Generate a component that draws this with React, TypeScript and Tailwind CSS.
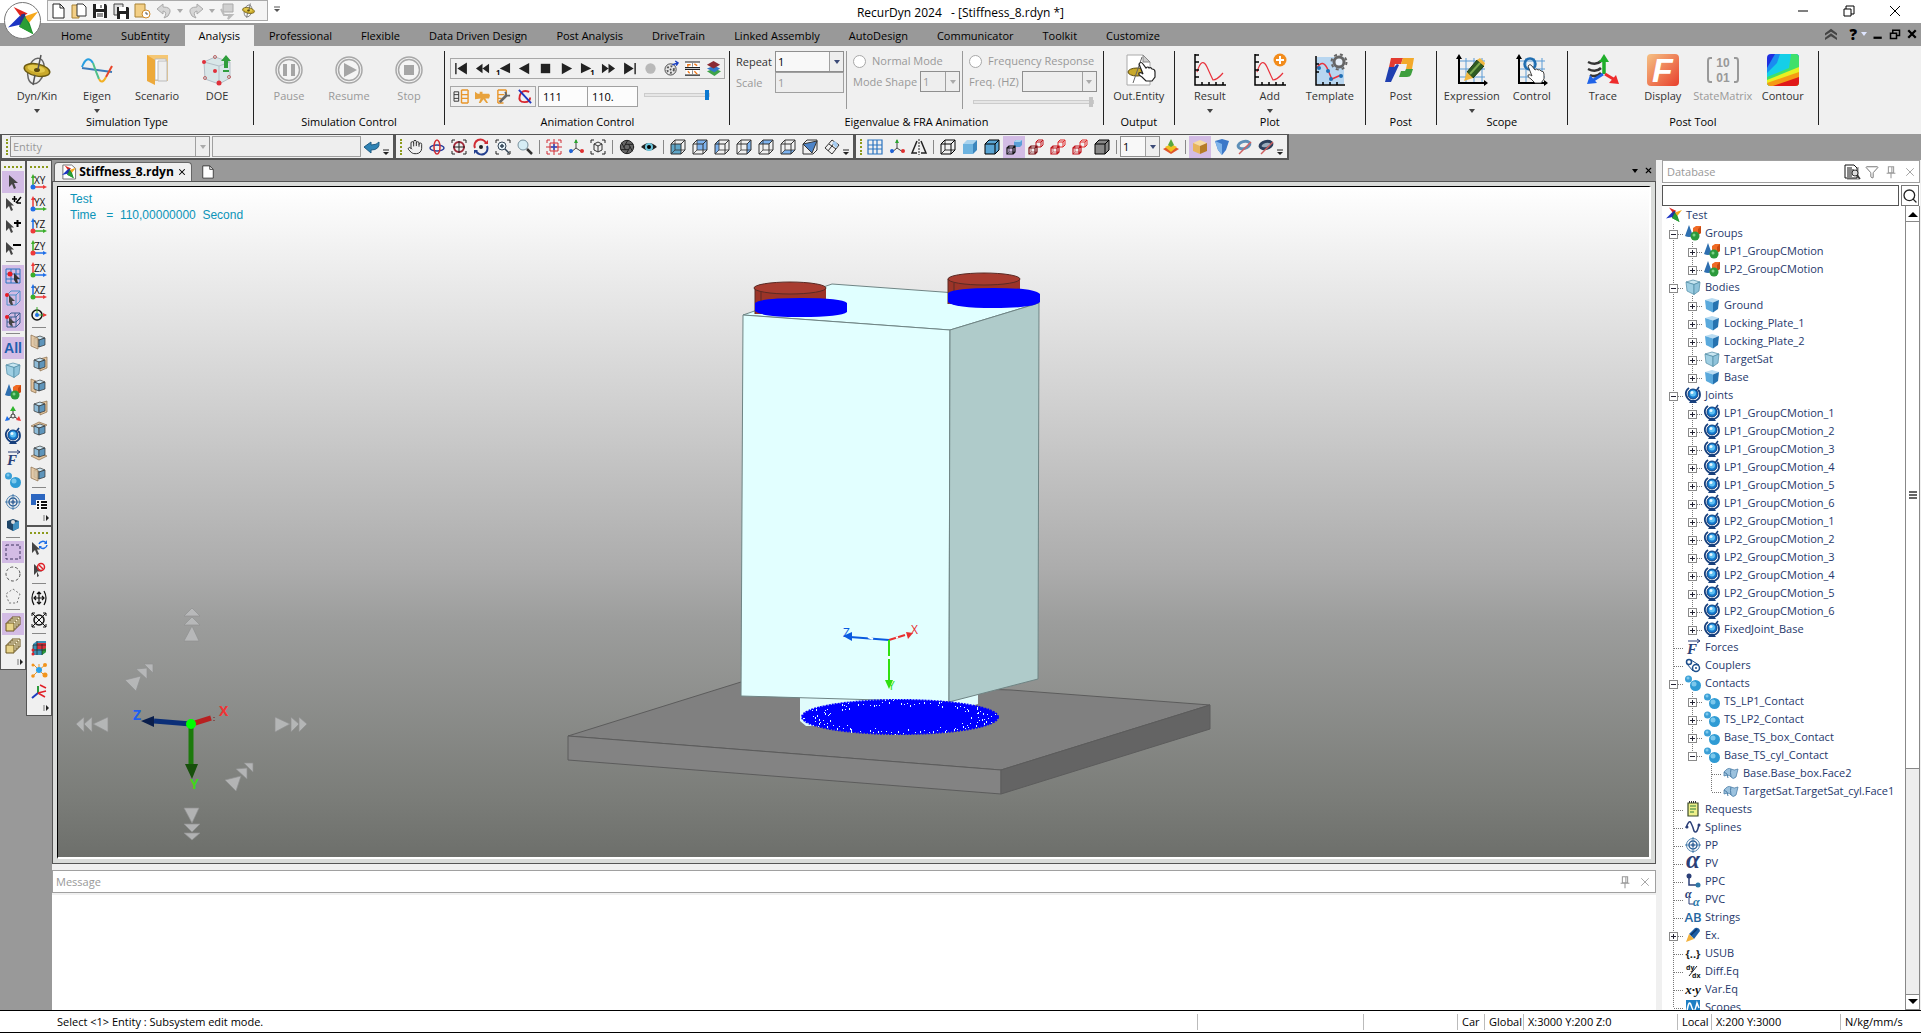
import type { ReactNode } from "react";
import clsx from "clsx";
import { Aperture, Filter, Hand, Search, X } from "lucide-react";

type IconProps = { children: ReactNode; size?: string; box?: number };

const Icon = ({ children, size = "h-4 w-4", box = 16 }: IconProps) => (
  <svg viewBox={`0 0 ${box} ${box}`} className={clsx(size, "shrink-0 overflow-visible")} fill="none">
    {children}
  </svg>
);

/* ---------- shared drawings ---------- */

const StarShape = () => (
  <>
    <path d="M0 23 14 9 17 19Z" fill="#1c35c4" />
    <path d="M6 1 21 8 14 12Z" fill="#e0261f" />
    <path d="M32 6 20 21 15 12Z" fill="#f7a91c" />
    <path d="M27 30 12 22 19 13 23 18Z" fill="#1a8f2b" />
    <path d="M14 9 18 8 20 21 12 22Z" fill="#25358c" />
    <path d="M18 11 24 24 27 30 12 22Z" fill="#2a9d36" />
  </>
);

const Gyro = ({ size = "h-8 w-8" }: { size?: string }) => (
  <Icon box={32} size={size}>
    <ellipse cx="15" cy="17" rx="8" ry="13" stroke="#666" strokeWidth="1.500" transform="rotate(14 15 17)" />
    <ellipse cx="16" cy="16" rx="13" ry="6" fill="#c9a92b" stroke="#6b5a12" strokeWidth="1.500" transform="rotate(12 16 16)" />
    <ellipse cx="15" cy="15" rx="9" ry="3.500" fill="#e3c94c" transform="rotate(12 16 16)" />
    <ellipse cx="16" cy="16" rx="3" ry="2" fill="#5b4a0c" />
    <path d="M20 1 17 15M14 21 12 31" stroke="#555" strokeWidth="1.500" />
  </Icon>
);

const SolidCube = ({ pale = false, gold = false }: { pale?: boolean; gold?: boolean }) => {
  const fill = gold ? ["#f8dca0", "#e7b45c", "#b67c26"] : pale ? ["#c9e6f1", "#9fcfe3", "#8fc3da"] : ["#b9dcf2", "#5aa9dc", "#2673b0"];
  const stroke = pale ? "#4d8aa3" : "none";
  return (
    <Icon>
      <path d="M8 1 15 3 9 5.500 1 3Z" fill={fill[0]} stroke={stroke} strokeWidth=".7" />
      <path d="M1 3 9 5.500V15.500L2 12Z" fill={fill[1]} stroke={stroke} strokeWidth=".7" />
      <path d="M9 5.500 15 3 14 12 9 15.500Z" fill={fill[2]} stroke={stroke} strokeWidth=".7" />
    </Icon>
  );
};

const FACES: Record<string, string> = {
  front: "M1 5H11V15H1Z",
  back: "M5 1H15V11H5Z",
  left: "M1 5 5 1V11L1 15Z",
  right: "M11 5 15 1V11L11 15Z",
  top: "M1 5 5 1H15L11 5Z",
  bottom: "M1 15 5 11H15L11 15Z",
};

const ViewCube = ({ face, fill = "#7db3f0", stroke = "#333" }: { face?: string; fill?: string; stroke?: string }) => (
  <Icon>
    {face === "all" && <path d="M1 5 5 1H15V11L11 15H1Z" fill={fill} />}
    {face && face !== "all" && <path d={FACES[face]} fill={fill} />}
    <path d="M1 5H11V15H1ZM1 5 5 1H15V11L11 15M11 5 15 1" stroke={stroke} />
    {face !== "all" && <path d="M5 1V11H15M5 11 1 15" stroke={stroke} strokeWidth=".8" />}
  </Icon>
);

const TwinCubes = ({ color, front = "#111", solid = false }: { color: string; front?: string; solid?: boolean }) => (
  <Icon>
    {solid ? (
      <>
        <path d="M8 3 10 1H16V6L14 8H8Z" fill="#5a9fd8" />
        <path d="M8 3 10 1H16L14 3Z" fill="#a9d3ee" />
      </>
    ) : (
      <path d="M8 3H13V8H8ZM8 3 10 1H15V6L13 8M13 3 15 1" stroke={color} />
    )}
    <path d="M1 9H7V15H1ZM1 9 3 7H9V13L7 15M7 9 9 7" stroke={front} strokeWidth="1.200" />
    <path d="M3 7V13H9M3 13 1 15" stroke={front} strokeWidth=".6" />
  </Icon>
);

const GroupIcon = () => (
  <Icon>
    <path d="M4 0 8 11Q4 13 0 11Z" fill="#2e6fb0" />
    <path d="M8 3 11 1H16V8L13 10H8Z" fill="#f06a24" />
    <path d="M13 4 16 1V8L13 10Z" fill="#c94a10" />
    <circle cx="10" cy="11" r="4.500" fill="#2c9a3c" />
    <circle cx="9" cy="10" r="1.500" fill="#7fd38a" />
  </Icon>
);

const JointIcon = () => (
  <Icon>
    <path d="M4 1Q0 4 1 8T6 14H10Q15 12 15 8T13 3" stroke="#173f7c" strokeWidth="1.800" />
    <circle cx="8" cy="7" r="5" fill="#1478cc" stroke="#0d3f80" />
    <circle cx="8" cy="6.500" r="3" fill="#5fc0f2" />
    <circle cx="7" cy="5.500" r="1.500" fill="#e6f7ff" />
    <path d="M11 4 14 0" stroke="#173f7c" strokeWidth="1.500" />
    <path d="M4 16H12L10 13H6Z" fill="#173f7c" />
  </Icon>
);

const ContactIcon = () => (
  <Icon>
    <circle cx="3.500" cy="4" r="3.500" fill="#3a9fd6" />
    <circle cx="3" cy="3" r="1.500" fill="#7cc8ec" />
    <circle cx="10.500" cy="10.500" r="5.500" fill="#2f9bd4" />
    <circle cx="9" cy="9" r="2.500" fill="#7cc8ec" />
  </Icon>
);

const ForceIcon = () => (
  <Icon>
    <text x="2" y="15" fontSize="15" fontWeight="700" fontStyle="italic" fontFamily="Liberation Serif, serif" fill="#2b3f77">F</text>
    <path d="M3 2H15M12 0 15 2 12 4" stroke="#2b3f77" />
  </Icon>
);

const PPIcon = () => (
  <Icon>
    <circle cx="8" cy="8" r="6.500" stroke="#4b7fae" />
    <circle cx="8" cy="8" r="4" stroke="#2d5f96" strokeWidth="1.500" />
    <circle cx="8" cy="8" r="1.700" fill="#1d2f6b" />
    <path d="M8 0V16M0 8H16" stroke="#4b7fae" />
  </Icon>
);

const FaceIcon = () => (
  <Icon>
    <path d="M1 7Q5 2 8 4T15 4L13 12Q10 15 8 12T1 11Z" fill="#9cc2de" stroke="#4d7fa8" strokeWidth=".8" />
    <path d="M1 7Q5 8 5 13M8 4Q7 7 8 12" stroke="#4d7fa8" />
  </Icon>
);

const CouplerIcon = () => (
  <Icon>
    <circle cx="4" cy="5" r="2.500" stroke="#1d4f8c" strokeWidth="1.500" />
    <circle cx="11" cy="11" r="3.500" stroke="#1d4f8c" strokeWidth="1.500" />
    <circle cx="11" cy="11" r="1" fill="#1d4f8c" />
    <path d="M6 3 14 8M2 7 8 14" stroke="#1d4f8c" />
  </Icon>
);

const PinIcon = () => (
  <Icon size="h-[14px] w-[14px]">
    <path d="M5 2H11V9H5ZM9 2V9M3 9.500H13M8 10V15" stroke="currentColor" strokeWidth="1.200" />
  </Icon>
);

const Glyph = ({ text, color = "#2b3f77", serif = false, size = 12, weight = 700 }: { text: string; color?: string; serif?: boolean; size?: number; weight?: number }) => (
  <Icon>
    <text x="8" y="13" textAnchor="middle" fontSize={size} fontWeight={weight} fontStyle={serif ? "italic" : "normal"} fontFamily={serif ? "Liberation Serif, serif" : "Open Sans, sans-serif"} fill={color}>
      {text}
    </text>
  </Icon>
);

const Cursor = ({ x = 0 }: { x?: number }) => <path d={`M${1 + x} 2V13L${4 + x} 10 6 15 8 14 6 9.500H${9 + x}Z`} fill="#444" />;

/* ---------- database tree ---------- */

type TreeNode = { label: string; icon: ReactNode; closed?: boolean; children?: TreeNode[] };

const leafs = (prefix: string, icon: ReactNode, from: number, to: number): TreeNode[] =>
  Array.from({ length: to - from + 1 }, (_, i) => ({ label: `${prefix}${from + i}`, icon, closed: true }));

const tree: TreeNode[] = [
  {
    label: "Groups",
    icon: <GroupIcon />,
    children: [
      { label: "LP1_GroupCMotion", icon: <GroupIcon />, closed: true },
      { label: "LP2_GroupCMotion", icon: <GroupIcon />, closed: true },
    ],
  },
  {
    label: "Bodies",
    icon: <SolidCube pale />,
    children: [
      { label: "Ground", icon: <SolidCube />, closed: true },
      ...leafs("Locking_Plate_", <SolidCube />, 1, 2),
      { label: "TargetSat", icon: <SolidCube pale />, closed: true },
      { label: "Base", icon: <SolidCube />, closed: true },
    ],
  },
  {
    label: "Joints",
    icon: <JointIcon />,
    children: [
      ...leafs("LP1_GroupCMotion_", <JointIcon />, 1, 6),
      ...leafs("LP2_GroupCMotion_", <JointIcon />, 1, 6),
      { label: "FixedJoint_Base", icon: <JointIcon />, closed: true },
    ],
  },
  { label: "Forces", icon: <ForceIcon /> },
  { label: "Couplers", icon: <CouplerIcon /> },
  {
    label: "Contacts",
    icon: <ContactIcon />,
    children: [
      { label: "TS_LP1_Contact", icon: <ContactIcon />, closed: true },
      { label: "TS_LP2_Contact", icon: <ContactIcon />, closed: true },
      { label: "Base_TS_box_Contact", icon: <ContactIcon />, closed: true },
      {
        label: "Base_TS_cyl_Contact",
        icon: <ContactIcon />,
        children: [
          { label: "Base.Base_box.Face2", icon: <FaceIcon /> },
          { label: "TargetSat.TargetSat_cyl.Face1", icon: <FaceIcon /> },
        ],
      },
    ],
  },
  {
    label: "Requests",
    icon: (
      <Icon>
        <path d="M3 2H13V15H3Z" fill="#eef08a" stroke="#3b4a2a" strokeWidth="1.200" />
        <path d="M5 5H11M5 8H11M5 11H9" stroke="#2d7a3a" />
        <path d="M4 1H12" stroke="#333" strokeWidth="2" strokeDasharray="1 1" />
      </Icon>
    ),
  },
  {
    label: "Splines",
    icon: (
      <Icon>
        <path d="M1 9Q4 0 6 4T9 12Q12 16 14 5" stroke="#2b3f77" strokeWidth="1.500" />
        <circle cx="2" cy="8" r="1.500" fill="#2b3f77" />
        <circle cx="14" cy="6" r="1.500" fill="#2b3f77" />
      </Icon>
    ),
  },
  { label: "PP", icon: <PPIcon /> },
  { label: "PV", icon: <Glyph text="α" serif size={25} /> },
  {
    label: "PPC",
    icon: (
      <Icon>
        <path d="M4 3V12H12" stroke="#2b3f77" strokeWidth="1.500" />
        <circle cx="4" cy="3" r="2.500" fill="#2b3f77" />
        <circle cx="13" cy="12" r="2.500" fill="#2c78a8" />
      </Icon>
    ),
  },
  {
    label: "PVC",
    icon: (
      <Icon>
        <path d="M4 7V13H9" stroke="#2b3f77" />
        <text x="0" y="7" fontSize="12" fontWeight="700" fontStyle="italic" fontFamily="Liberation Serif, serif" fill="#2b3f77">α</text>
        <text x="8" y="15" fontSize="12" fontWeight="700" fontStyle="italic" fontFamily="Liberation Serif, serif" fill="#2c78a8">α</text>
      </Icon>
    ),
  },
  { label: "Strings", icon: <Glyph text="AB" color="#2466a0" size={13} weight={600} /> },
  {
    label: "Ex.",
    closed: true,
    icon: (
      <Icon>
        <path d="M4 7 10 1Q14 0 15 4L9 12Z" fill="#1f5fa6" />
        <path d="M6 8 12 2" stroke="#0c3469" strokeWidth="1.500" />
        <path d="M1 15 4 7 9 12Z" fill="#f2b13c" />
      </Icon>
    ),
  },
  { label: "USUB", icon: <Glyph text="{..}" color="#222" size={11} /> },
  {
    label: "Diff.Eq",
    icon: (
      <Icon>
        <text x="1" y="7" fontSize="7" fontWeight="700" fontFamily="Open Sans, sans-serif" fill="#222">dy</text>
        <text x="7" y="15" fontSize="7" fontWeight="700" fontFamily="Open Sans, sans-serif" fill="#222">dx</text>
        <path d="M4 13 12 3" stroke="#222" />
      </Icon>
    ),
  },
  { label: "Var.Eq", icon: <Glyph text="x·y" color="#111" serif size={13} /> },
  {
    label: "Scopes",
    icon: (
      <Icon>
        <rect x="1" y="1" width="14" height="14" fill="#1d7fc4" />
        <path d="M2 12Q4 0 6 6T9 12 12 4L14 9" stroke="#fff" strokeWidth="1.500" />
      </Icon>
    ),
  },
];

/* one 19px column of the tree: dotted guides plus the +/- box */
const Guide = ({ down, up = true, branch, box }: { down: boolean; up?: boolean; branch?: boolean; box?: "+" | "-" }) => (
  <svg viewBox="0 0 19 18" className="h-[18px] w-[19px] shrink-0" fill="none">
    {up && <path d="M9.500 0V10" stroke="#777" strokeDasharray="1 1" />}
    {down && <path d="M9.500 10V18" stroke="#777" strokeDasharray="1 1" />}
    {branch && <path d="M10 10.500H19" stroke="#777" strokeDasharray="1 1" />}
    {box && <rect x="5.500" y="6.500" width="8" height="8" fill="#fff" stroke="#8a8a8a" />}
    {box && <path d="M7 10.500H12" stroke="#223" />}
    {box === "+" && <path d="M9.500 8V13" stroke="#223" />}
  </svg>
);

const Rows = ({ nodes, guides = [] }: { nodes: TreeNode[]; guides?: boolean[] }) => (
  <ul>
    {nodes.map((node, i) => {
      const more = i < nodes.length - 1;
      return (
        <li key={node.label}>
          <div className="flex h-[18px] items-center whitespace-nowrap">
            {guides.map((g, j) => (
              <Guide key={j} up={g} down={g} />
            ))}
            <Guide down={more} branch box={node.closed ? "+" : node.children ? "-" : undefined} />
            <span className="flex w-[19px] justify-center">{node.icon}</span>
            <span className="pl-[3px]">{node.label}</span>
          </div>
          {node.children && <Rows nodes={node.children} guides={[...guides, more]} />}
        </li>
      );
    })}
  </ul>
);

const DatabasePanel = () => (
  <aside className="flex w-[258px] shrink-0 flex-col bg-white">
    <header className="flex h-[23px] shrink-0 items-center gap-[5px] border border-[#a0a0a0] pl-1 pr-[2px] text-[#999]">
      <h2 className="flex-1">Database</h2>
      <button aria-label="Find in list">
        <Icon>
          <path d="M3 3H15V16H3Z" fill="#bbb" />
          <path d="M1 1H10L13 4V14H1Z" fill="#fff" stroke="#111" />
          <path d="M3 4H8M3 6H10M3 8H9M3 10H8M3 12H8" stroke="#111" />
          <circle cx="11" cy="9" r="3" fill="#ddd" stroke="#333" />
          <path d="M13 11 16 15" stroke="#333" strokeWidth="1.500" />
        </Icon>
      </button>
      <button aria-label="Filter"><Filter className="h-[14px] w-[14px] text-[#666]" strokeWidth={1.5} /></button>
      <button aria-label="Pin"><PinIcon /></button>
      <button aria-label="Close database"><X className="h-[14px] w-[14px]" strokeWidth={1.5} /></button>
    </header>
    <div className="mt-[2px] flex h-[21px] shrink-0 gap-[2px] pr-px">
      <input aria-label="Search database" className="min-w-0 flex-1 border border-[#555] px-1 outline-none" />
      <button aria-label="Search" className="flex w-[18px] items-center justify-center border border-[#777]">
        <Search className="h-4 w-4 text-[#222]" strokeWidth={2} />
      </button>
    </div>
    <div className="flex min-h-0 flex-1">
      <div className="min-w-0 flex-1 overflow-hidden pl-[2px] text-[#26386b]">
        <div className="flex h-[18px] items-center">
          <span className="flex w-[19px] justify-center">
            <Icon box={32}><StarShape /></Icon>
          </span>
          <span className="pl-[3px]">Test</span>
        </div>
        <Rows nodes={tree} />
      </div>
      <div className="flex w-[15px] flex-col border-x border-[#888] bg-[#eee]">
        <button aria-label="Scroll up" className="flex h-4 shrink-0 items-center justify-center border-b border-[#888] bg-white">
          <Icon box={10} size="h-[10px] w-[10px]"><path d="M0 8 5 3 10 8Z" fill="#000" /></Icon>
        </button>
        <div className="flex basis-[68%] items-center justify-center border-b border-[#888] bg-white">
          <Icon box={8} size="h-2 w-2"><path d="M0 1H8M0 4H8M0 7H8" stroke="#333" strokeWidth="1.500" /></Icon>
        </div>
        <div className="flex-1" />
        <button aria-label="Scroll down" className="flex h-4 shrink-0 items-center justify-center border-y border-[#888] bg-white">
          <Icon box={10} size="h-[10px] w-[10px]"><path d="M0 2 5 7 10 2Z" fill="#000" /></Icon>
        </button>
      </div>
    </div>
  </aside>
);

/* ---------- ribbon ---------- */

const Arrow = ({ className = "text-[#444]" }: { className?: string }) => (
  <svg viewBox="0 0 6 4" className={clsx("h-1 w-[6px] shrink-0", className)}>
    <path d="M0 0H6L3 4Z" fill="currentColor" />
  </svg>
);

type BigButtonProps = { label: string; icon: ReactNode; menu?: boolean; disabled?: boolean };

const BigButton = ({ label, icon, menu, disabled }: BigButtonProps) => (
  <button disabled={disabled} className={clsx("flex w-[60px] flex-col items-center pt-2", disabled ? "text-[#999]" : "text-[#333]")}>
    {icon}
    <span className="mt-[2px] h-4 whitespace-nowrap leading-4">{label}</span>
    {menu && <Arrow className="mt-[5px] text-[#444]" />}
  </button>
);

const RibbonGroup = ({ label, children, className = "px-[5px]" }: { label: string; children: ReactNode; className?: string }) => (
  <>
    <section className={clsx("flex shrink-0 flex-col", className)}>
      <div className="flex h-[68px]">{children}</div>
      <h3 className="text-center leading-4 text-black">{label}</h3>
    </section>
    <div className="mt-[5px] h-[74px] w-px shrink-0 bg-[#222]" />
  </>
);

const RoundIcon = ({ children }: { children: ReactNode }) => (
  <Icon box={32} size="h-8 w-8">
    <circle cx="16" cy="16" r="13" fill="#f4f4f4" stroke="#a8a8a8" strokeWidth="1.500" />
    <circle cx="16" cy="16" r="10.500" stroke="#a8a8a8" strokeWidth="1.500" />
    {children}
  </Icon>
);

const PlotIcon = ({ children }: { children?: ReactNode }) => (
  <Icon box={32} size="h-8 w-8">
    <path d="M3 18Q8 2 13 13T19 26Q23 26 29 19" stroke="#e8323c" strokeWidth="1.200" />
    <path d="M1 0V31H32M1 1H5M1 8H5M1 16H5M1 23H5M8 31V28M15 31V28M22 31V28M29 31V28" stroke="#000" strokeWidth="1.500" />
    {children}
  </Icon>
);

const GridIcon = ({ children }: { children: ReactNode }) => (
  <Icon box={32} size="h-8 w-8">
    <path d="M3 7H29M3 15H29M3 23H29M10 4V28M18 4V28M26 4V28" stroke="#5b9bd5" />
    <path d="M3 3V29H30" stroke="#000" strokeWidth="2" />
    <path d="M0 5 3 0 6 5ZM28 26 32 29 28 32Z" fill="#000" />
    {children}
  </Icon>
);

const handPath = "M12 12Q14 9 16 12L19 16Q21 14 22 16 24 15 25 17 28 17 28 20L28 25 25 29H19L15 25Q11 23 12 21 14 20 16 22Z";

const Combo = ({ id, label, value, disabled, className }: { id: string; label: string; value?: string; disabled?: boolean; className?: string }) => (
  <div className={clsx("relative flex h-[21px] items-center border border-[#8f8f8f]", disabled ? "bg-[#eee] text-[#999]" : "bg-[#f8f8f8] text-black", className)}>
    <select id={id} aria-label={label} disabled={disabled} className="h-full w-full appearance-none pl-[2px] opacity-100 outline-none">
      <option>{value}</option>
    </select>
    <span className="pointer-events-none absolute inset-y-0 right-0 flex w-[14px] items-center justify-center border-l border-[#a0a0a0] bg-[#eee]">
      <Arrow className={disabled ? "text-[#aaa]" : "text-[#3b4a77]"} />
    </span>
  </div>
);

const playback: { label: string; icon: ReactNode }[] = [
  { label: "First", icon: <path d="M2 2V14M13 3V13L5 8Z" stroke="#222" strokeWidth="1.500" fill="#222" /> },
  { label: "Fast back", icon: <path d="M8 3V13L1 8ZM15 3V13L8 8Z" fill="#222" /> },
  { label: "Step back", icon: <><path d="M15 2V13L4 8Z" fill="#222" /><text x="0" y="15" fontSize="8" fontWeight="700" fill="#000">1</text></> },
  { label: "Play back", icon: <path d="M13 2V14L2 8Z" fill="#222" /> },
  { label: "Halt", icon: <path d="M3 3H13V13H3Z" fill="#222" /> },
  { label: "Play", icon: <path d="M3 2V14L14 8Z" fill="#222" /> },
  { label: "Step", icon: <><path d="M1 2V13L12 8Z" fill="#222" /><text x="11" y="15" fontSize="8" fontWeight="700" fill="#000">1</text></> },
  { label: "Fast forward", icon: <path d="M1 3V13L8 8ZM8 3V13L15 8Z" fill="#222" /> },
  { label: "Last", icon: <path d="M14 2V14M3 3V13L11 8Z" stroke="#222" strokeWidth="1.500" fill="#222" /> },
  { label: "Record", icon: <circle cx="8" cy="8" r="5.500" fill="#b9b9b9" /> },
  {
    label: "Reel",
    icon: (
      <>
        <circle cx="7" cy="9" r="6" fill="#e6e6e6" stroke="#444" />
        <circle cx="7" cy="9" r="3.500" stroke="#555" strokeWidth="2" strokeDasharray="2 2" />
        <circle cx="7" cy="9" r="1" fill="#444" />
        <path d="M9 4 15 2M12 0 15 2 13 5" stroke="#1a3fc0" strokeWidth="1.500" />
      </>
    ),
  },
  {
    label: "Frames",
    icon: (
      <>
        <path d="M1 1H15V15H1Z" fill="#fff" />
        <path d="M0 1H16M0 7H16M0 9H16M0 15H16" stroke="#222" strokeWidth="1.200" />
        <path d="M8 2V6M8 10V14" stroke="#888" />
        <path d="M3 6V4H6M10 3 13 5M3 11 5 13M10 11 13 14" stroke="#f07818" strokeWidth="1.500" />
      </>
    ),
  },
  {
    label: "Layers",
    icon: (
      <>
        <path d="M1 11 9 8 16 11 9 16Z" fill="#3fa34a" />
        <path d="M1 8 9 5 15 8 9 12Z" fill="#3177c9" />
        <path d="M1 4 8 0 15 4 8 8Z" fill="#8b2a33" />
      </>
    ),
  },
];

const media: { label: string; icon: ReactNode }[] = [
  { label: "Film", icon: <><path d="M0 3V13M5 3V13M0 3H5M0 6H5M0 10H5M0 13H5" stroke="#333" /><path d="M8 1V15M15 1V15M8 1H15M8 6H15M8 10H15M8 15H15" stroke="#e8952a" strokeWidth="1.500" /></> },
  { label: "Camera", icon: <path d="M0 3 3 5H5V3H8V5H15L16 7 15 10H11L14 15H12L9 11 6 15H4L6 10 0 11Z" fill="#e8a23c" /> },
  { label: "Film options", icon: <><path d="M2 1V15M11 1V6M2 1H11M2 6H9M2 10H6M2 15H8" stroke="#e8952a" strokeWidth="1.500" /><path d="M4 14 11 7" stroke="#666" strokeWidth="3" /><path d="M10 3 11 7 15 7" stroke="#666" strokeWidth="2" /></> },
  { label: "Loop off", icon: <><path d="M13 3Q5 0 3 7T8 14Q14 14 14 9" stroke="#d8262c" strokeWidth="2" /><path d="M2 1 15 15" stroke="#1d35c0" strokeWidth="2" /></> },
];

const SmallButton = ({ label, children }: { label: string; children: ReactNode }) => (
  <button aria-label={label} className="flex w-[21px] items-center justify-center">
    <Icon size="h-[15px] w-[15px]">{children}</Icon>
  </button>
);

const Radio = ({ label }: { label: string }) => (
  <label className="flex h-5 items-center gap-[6px] whitespace-nowrap">
    <input type="radio" disabled className="h-[13px] w-[13px] appearance-none rounded-full border border-[#a8a8a8] bg-white" />
    {label}
  </label>
);

const Ribbon = () => (
  <div className="flex h-[88px] shrink-0 overflow-hidden bg-[#f0f0f0]">
    <RibbonGroup label="Simulation Type" className="pl-[7px] pr-[6px]">
      <BigButton label="Dyn/Kin" menu icon={<Gyro />} />
      <BigButton
        label="Eigen"
        menu
        icon={
          <Icon box={32} size="h-8 w-8">
            <path d="M1 14 31 18" stroke="#3d7ab8" strokeWidth="2" />
            <path d="M1 13Q6 0 12 9" stroke="#2a9fe0" strokeWidth="2" />
            <path d="M12 9Q15 18 18 25" stroke="#4fc08a" strokeWidth="2" />
            <path d="M18 25Q21 31 25 23" stroke="#f2b024" strokeWidth="2" />
            <path d="M25 23 31 12" stroke="#e8452a" strokeWidth="2" />
          </Icon>
        }
      />
      <BigButton
        label="Scenario"
        icon={
          <Icon box={32} size="h-8 w-8">
            <path d="M6 1H27V27H8Z" fill="#f5c774" />
            <path d="M14 5H25V26H14Z" fill="#fff" stroke="#bbb" />
            <path d="M17 7H26V27H17Z" fill="#eee" stroke="#bbb" />
            <path d="M6 1 14 6V31L6 27Z" fill="#eda93a" />
          </Icon>
        }
      />
      <BigButton
        label="DOE"
        icon={
          <Icon box={32} size="h-8 w-8">
            <path d="M3 8 14 3 29 8V24L18 30 4 25Z" fill="#d8e6e8" stroke="#b4bfc8" />
            <path d="M3 8 18 12V30M18 12 29 8" stroke="#b4bfc8" />
            <circle cx="3" cy="8" r="2" fill="#e0303a" />
            <circle cx="14" cy="17" r="2" fill="#e0303a" />
            <circle cx="18" cy="29" r="2.500" fill="#e0303a" />
            <circle cx="14" cy="3" r="1.500" stroke="#b66" />
            <circle cx="4" cy="24" r="1.500" stroke="#b66" />
            <circle cx="28" cy="23" r="1.500" stroke="#b66" />
            <path d="M25 1 30 7H27V14H23V7H20ZM22 16H28V18H22Z" fill="#2f9e3c" />
          </Icon>
        }
      />
    </RibbonGroup>
    <RibbonGroup label="Simulation Control">
      <BigButton label="Pause" disabled icon={<RoundIcon><path d="M10 10H14V22H10ZM18 10H22V22H18Z" fill="#a5a5a5" /></RoundIcon>} />
      <BigButton label="Resume" disabled icon={<RoundIcon><path d="M11 9V23L24 16Z" fill="#a5a5a5" /></RoundIcon>} />
      <BigButton label="Stop" disabled icon={<RoundIcon><path d="M11 11H21V21H11Z" fill="#a5a5a5" /></RoundIcon>} />
    </RibbonGroup>
    <RibbonGroup label="Animation Control" className="pl-[5px] pr-[4px]">
      <div className="pt-3">
        <div className="flex h-[21px] border border-[#a8a8a8]">
          {playback.map((b) => (
            <SmallButton key={b.label} label={b.label}>{b.icon}</SmallButton>
          ))}
        </div>
        <div className="mt-[7px] flex h-[21px]">
          <div className="flex border border-[#a8a8a8]">
            {media.map((b) => (
              <SmallButton key={b.label} label={b.label}>{b.icon}</SmallButton>
            ))}
          </div>
          <input aria-label="Frame" defaultValue="111" className="ml-[2px] w-[50px] border border-[#a0a0a0] bg-[#fcfcfc] px-1 text-black" />
          <input aria-label="Frame time" defaultValue="110." className="w-[50px] border border-l-0 border-[#a0a0a0] bg-[#fcfcfc] px-1 text-black" />
          <input
            aria-label="Timeline"
            type="range"
            defaultValue={100}
            className="ml-[6px] mt-[7px] h-1 w-[66px] appearance-none border border-[#ccc] bg-[#e6e6e6] [&::-webkit-slider-thumb]:h-[10px] [&::-webkit-slider-thumb]:w-1 [&::-webkit-slider-thumb]:appearance-none [&::-webkit-slider-thumb]:bg-[#0a78d1]"
          />
        </div>
      </div>
    </RibbonGroup>
    <RibbonGroup label="Eigenvalue & FRA Animation" className="px-[6px]">
      <div className="flex pt-[5px] text-[#999]">
        <div className="grid h-[42px] grid-cols-[39px_69px] items-center">
          <label htmlFor="repeat" className="text-[#333]">Repeat</label>
          <Combo id="repeat" label="Repeat" value="1" />
          <label htmlFor="scale">Scale</label>
          <input id="scale" disabled defaultValue="1" className="h-[21px] border border-[#a0a0a0] bg-[#eee] px-[2px]" />
        </div>
        <div className="ml-[2px] mr-[6px] h-[58px] w-px bg-[#999]" />
        <div>
          <Radio label="Normal Mode" />
          <div className="flex items-center gap-[3px] whitespace-nowrap">
            <label htmlFor="mode-shape">Mode Shape</label>
            <Combo id="mode-shape" label="Mode Shape" value="1" disabled className="w-10" />
          </div>
        </div>
        <div className="ml-[2px] mr-[6px] h-[58px] w-px bg-[#999]" />
        <div>
          <Radio label="Frequency Response" />
          <div className="flex items-center gap-[3px] whitespace-nowrap">
            <label htmlFor="freq">Freq. (HZ)</label>
            <Combo id="freq" label="Frequency" disabled className="w-[75px]" />
          </div>
          <input
            aria-label="Frequency slider"
            type="range"
            disabled
            defaultValue={100}
            className="ml-1 mt-[8px] block h-1 w-[121px] appearance-none border border-[#ccc] bg-[#e6e6e6] [&::-webkit-slider-thumb]:h-[10px] [&::-webkit-slider-thumb]:w-1 [&::-webkit-slider-thumb]:appearance-none [&::-webkit-slider-thumb]:bg-[#c4c4c4]"
          />
        </div>
      </div>
    </RibbonGroup>
    <RibbonGroup label="Output">
      <BigButton
        label="Out.Entity"
        icon={
          <Icon box={32} size="h-8 w-8">
            <path d="M4 1H20L27 8V31H4Z" fill="#fff" stroke="#aaa" />
            <path d="M20 1V8H27Z" fill="#ccc" stroke="#888" />
            <ellipse cx="14" cy="18" rx="9" ry="4" fill="#c9a92b" stroke="#5b4a0c" />
            <path d="M19 3 10 29" stroke="#666" />
            <g transform="translate(4 -2)"><path d={handPath} fill="#fff" stroke="#222" strokeWidth="1.200" /></g>
          </Icon>
        }
      />
    </RibbonGroup>
    <RibbonGroup label="Plot">
      <BigButton label="Result" menu icon={<PlotIcon />} />
      <BigButton
        label="Add"
        menu
        icon={
          <PlotIcon>
            <circle cx="26" cy="6" r="6.500" fill="#f28c1c" />
            <path d="M26 2V10M22 6H30" stroke="#fff" strokeWidth="2" />
          </PlotIcon>
        }
      />
      <BigButton
        label="Template"
        icon={
          <Icon box={32} size="h-8 w-8">
            <path d="M2 3H30V30H2Z" fill="#b8d6f0" />
            <path d="M3 14Q9 4 14 16T18 25L27 21" stroke="#e8323c" strokeWidth="1.500" />
            <circle cx="5" cy="14" r="2" fill="#1f6fb5" /><circle cx="14" cy="17" r="2" fill="#1f6fb5" /><circle cx="17" cy="25" r="2" fill="#1f6fb5" /><circle cx="27" cy="22" r="2" fill="#1f6fb5" />
            <path d="M2 2V31H31M9 31V28M16 31V28M23 31V28M2 10H5M2 18H5" stroke="#000" strokeWidth="1.500" />
            <circle cx="25" cy="8" r="5" fill="#e8f0f8" stroke="#666" strokeWidth="3" />
            <circle cx="25" cy="8" r="7.500" stroke="#666" strokeWidth="2" strokeDasharray="3 3" />
          </Icon>
        }
      />
    </RibbonGroup>
    <RibbonGroup label="Post">
      <BigButton
        label="Post"
        icon={
          <Icon box={32} size="h-8 w-8">
            <path d="M6 4H18L16 10H10L9 13H4Z" fill="#e23b30" />
            <path d="M18 4H29L27 15H21L22 10H16Z" fill="#f3a92a" />
            <path d="M21 15H28L26 21Q25 23 22 23H14L16 17H20Z" fill="#3f9f3d" />
            <path d="M4 13H9L12 10 14 11 6 28H0Z" fill="#1f3fb0" />
          </Icon>
        }
      />
    </RibbonGroup>
    <RibbonGroup label="Scope">
      <BigButton
        label="Expression"
        menu
        icon={
          <GridIcon>
            <path d="M11 18 21 6 28 12 17 24Z" fill="#2f5c22" stroke="#1d3a14" />
            <path d="M14 20 24 9" stroke="#79a84e" strokeWidth="2" />
            <path d="M8 27 11 18 17 24ZM21 6 24 4 29 9 28 12Z" fill="#f0b840" />
          </GridIcon>
        }
      />
      <BigButton
        label="Control"
        icon={
          <GridIcon>
            <circle cx="14" cy="10" r="5.500" stroke="#1f6db0" strokeWidth="2.500" />
            <path d={handPath} fill="#fff" stroke="#444" />
          </GridIcon>
        }
      />
    </RibbonGroup>
    <RibbonGroup label="Post Tool">
      <BigButton
        label="Trace"
        icon={
          <Icon box={32} size="h-8 w-8">
            <path d="M1 8Q9 12 14 7M1 15Q9 19 14 14M3 21Q9 24 14 19" stroke="#333" strokeWidth="2.500" />
            <path d="M17 20V5" stroke="#1fae2a" strokeWidth="3.500" /><path d="M12 8 17 0 22 8Z" fill="#1fae2a" />
            <path d="M16 20 5 27" stroke="#1f63e8" strokeWidth="3" /><path d="M0 30 3 21 10 29Z" fill="#1f63e8" />
            <path d="M18 20 28 26" stroke="#ee2c2c" strokeWidth="3" /><path d="M32 30 22 29 29 21Z" fill="#ee2c2c" />
          </Icon>
        }
      />
      <BigButton
        label="Display"
        icon={
          <Icon box={32} size="h-8 w-8">
            <defs>
              <linearGradient id="display" x1="0" y1="0" x2="1" y2="1">
                <stop stopColor="#f5c184" /><stop offset="1" stopColor="#e8402c" />
              </linearGradient>
            </defs>
            <rect width="32" height="32" rx="4" fill="url(#display)" />
            <text x="5" y="28" fontSize="34" fontWeight="700" fontStyle="italic" fontFamily="Liberation Sans, sans-serif" fill="#fff">F</text>
          </Icon>
        }
      />
      <BigButton
        label="StateMatrix"
        disabled
        icon={
          <Icon box={32} size="h-8 w-8">
            <path d="M5 4H3Q1 4 1 7V25Q1 28 3 28H5M27 4H29Q31 4 31 7V25Q31 28 29 28H27" stroke="#999" strokeWidth="2" />
            <text x="16" y="13" textAnchor="middle" fontSize="12" fontWeight="700" fontFamily="Liberation Sans, sans-serif" fill="#999">10</text>
            <text x="16" y="28" textAnchor="middle" fontSize="12" fontWeight="700" fontFamily="Liberation Sans, sans-serif" fill="#999">01</text>
          </Icon>
        }
      />
      <BigButton
        label="Contour"
        icon={
          <Icon box={32} size="h-8 w-8">
            <defs><clipPath id="contour"><rect width="32" height="32" rx="4" /></clipPath></defs>
            <g clipPath="url(#contour)">
              <path d="M0 0H32V32H0Z" fill="#1f2fe0" />
              <path d="M8 0H32V32H0V14Z" fill="#1a8cf0" />
              <path d="M13 0H32V32H0V19L10 9Z" fill="#15cfe8" />
              <path d="M24 0H32V32H0V23L22 14Z" fill="#3fe06a" />
              <path d="M32 13V32H0V26Z" fill="#e8ef22" />
              <path d="M32 18V32H0V29Z" fill="#f59a14" />
              <path d="M32 23V32H6Z" fill="#e01818" />
            </g>
          </Icon>
        }
      />
    </RibbonGroup>
  </div>
);

/* ---------- icon tool bars ---------- */

type Tool = { label: string; icon: ReactNode; active?: boolean } | "sep";

const ToolButton = ({ label, icon, active }: { label: string; icon: ReactNode; active?: boolean }) => (
  <button aria-label={label} className={clsx("flex h-[22px] w-[22px] shrink-0 items-center justify-center", active && "bg-[#d3bce5]")}>
    {icon}
  </button>
);

const ToolRow = ({ tools }: { tools: Tool[] }) => (
  <>
    {tools.map((t, i) => (t === "sep" ? <span key={i} className="mx-[3px] h-[14px] w-px bg-[#888]" /> : <ToolButton key={i} {...t} />))}
  </>
);

const ToolColumn = ({ tools }: { tools: Tool[] }) => (
  <div className="flex flex-col items-center border border-[#555] bg-[#f0f0f0] pt-[5px]">
    <span className="mb-[3px] w-[18px] border-t-2 border-dotted border-[#8c9a1c]" />
    {tools.map((t, i) => (t === "sep" ? <span key={i} className="mb-[3px] mt-[2px] h-px w-[14px] bg-[#888]" /> : <ToolButton key={i} {...t} />))}
    <span className="flex h-3 w-full justify-end pr-[2px] text-[#222]">
      <Icon box={6} size="mt-[2px] h-[6px] w-[6px]"><path d="M1 0V6" stroke="#777" /><path d="M3 0V6L6 3Z" fill="#222" /></Icon>
    </span>
  </div>
);

const Grip = () => <span className="ml-1 mr-[2px] h-4 border-l-2 border-dotted border-[#8c9a1c]" />;

const MoreMark = () => (
  <Icon box={6} size="mt-3 h-[6px] w-[6px]"><path d="M0 0H6" stroke="#222" /><path d="M0 2H6L3 5Z" fill="#222" /></Icon>
);

const MiniAxes = () => (
  <>
    <path d="M8 9V1M8 9 2 14M8 9 14 13" stroke="#444" />
    <path d="M6 4 8 0 10 4Z" fill="#2aa52e" />
    <circle cx="3" cy="12" r="2" fill="#1f63d8" />
    <circle cx="14" cy="12" r="2" fill="#e03030" />
  </>
);

const corners = "M1 4V1H4M12 1H15V4M15 12V15H12M4 15H1V12";

const viewTools: Tool[] = [
  { label: "Pan", icon: <Hand className="h-4 w-4 text-[#333]" strokeWidth={1.5} /> },
  { label: "Orbit", icon: <Icon><ellipse cx="8" cy="9" rx="7" ry="3" stroke="#2a3f9c" strokeWidth="1.500" /><ellipse cx="8" cy="8" rx="3" ry="7" stroke="#d02c34" strokeWidth="1.500" /></Icon> },
  { label: "Rotate view", icon: <Icon><path d={corners} stroke="#222" /><circle cx="8" cy="8" r="5" stroke="#a02838" strokeWidth="2" /><path d="M8 2V14M2 8H14" stroke="#222" /></Icon> },
  { label: "Spin", icon: <Icon><path d="M2 9A6 6 0 0 1 13 4" stroke="#d02c34" strokeWidth="2" /><path d="M14 7A6 6 0 0 1 3 12" stroke="#24408f" strokeWidth="2" /><path d="M11 5H15V1Z" fill="#d02c34" /><path d="M5 11H1V15Z" fill="#24408f" /><circle cx="8" cy="8" r="2" fill="#222" /></Icon> },
  { label: "Zoom in", icon: <Icon><path d={corners} stroke="#222" /><circle cx="7" cy="7" r="4" fill="#e8f4fa" stroke="#345" /><path d="M7 5V9M5 7H9M10 10 14 14" stroke="#345" strokeWidth="1.500" /></Icon> },
  { label: "Zoom", icon: <Icon><circle cx="6" cy="6" r="5" fill="#d6edf5" stroke="#78909c" /><path d="M10 10 15 15" stroke="#333" strokeWidth="2.500" /></Icon> },
  "sep",
  { label: "Fit", icon: <Icon><path d={corners} stroke="#d02c34" /><path d="M8 0V16M0 8H16M4 4H12V12H4Z" stroke="#d02c34" /><path d="M5 8H11M8 5V11" stroke="#2c4fc0" strokeWidth="1.500" /></Icon> },
  { label: "Center axes", icon: <Icon><MiniAxes /></Icon> },
  { label: "Fit cube", icon: <Icon><path d={corners} stroke="#222" /><path d="M4 5 8 3 12 5V11L8 13 4 11ZM4 5 8 7 12 5M8 7V13" stroke="#333" /></Icon> },
  "sep",
  { label: "Capture", icon: <Aperture className="h-4 w-4 fill-[#666] text-[#222]" strokeWidth={1.5} /> },
  { label: "Visibility", icon: <Icon><path d="M0 8Q8 0 16 8 8 15 0 8Z" fill="#222" /><circle cx="8" cy="8" r="4" fill="#6fc6dc" /><circle cx="8" cy="8" r="2" fill="#000" /></Icon> },
  "sep",
  { label: "Shaded view", icon: <ViewCube face="front" fill="#5fa6c8" /> },
  { label: "Back view", icon: <ViewCube face="back" /> },
  { label: "Left view", icon: <ViewCube face="left" /> },
  { label: "Right view", icon: <ViewCube face="right" /> },
  { label: "Top view", icon: <ViewCube face="top" /> },
  { label: "Bottom view", icon: <ViewCube face="bottom" /> },
  { label: "Iso view", icon: <Icon><path d="M1 5 5 1H15V11L11 15H1Z" stroke="#333" /><path d="M1 5 15 2 10 14Z" fill="#4d84c8" stroke="#333" /></Icon> },
  { label: "Tilted view", icon: <Icon><path d="M1 9 8 1 15 6 8 15ZM4 12 11 3M5 5 12 10" stroke="#333" /><path d="M8 4 11 2 14 6 12 9Z" fill="#a6cdf2" /></Icon> },
];

const renderTools: Tool[] = [
  { label: "Grid", icon: <Icon><path d="M1 1H15V15H1ZM1 6H15M1 10H15M6 1V15M10 1V15" stroke="#2a74c0" strokeWidth="1.200" /></Icon> },
  { label: "Axes", icon: <Icon><MiniAxes /></Icon> },
  { label: "Mirror", icon: <Icon><path d="M6 2 1 14H6M10 2 15 14H10" stroke="#222" strokeWidth="1.500" /><path d="M8 0V16" stroke="#222" strokeDasharray="2 1" /></Icon> },
  "sep",
  { label: "Wireframe", icon: <ViewCube stroke="#000" /> },
  { label: "Shaded", icon: <Icon><path d="M1 5 5 1H15L11 5Z" fill="#a9d3ee" /><path d="M1 5H11V15H1Z" fill="#6db3df" /><path d="M11 5 15 1V11L11 15Z" fill="#3c86bd" /></Icon> },
  { label: "Shaded with edges", icon: <ViewCube face="all" fill="#5aa5d4" stroke="#000" /> },
  { label: "Mixed", active: true, icon: <TwinCubes color="#111" solid /> },
  { label: "Red wire 1", icon: <TwinCubes color="#c01018" front="#7a1015" /> },
  { label: "Red wire 2", icon: <TwinCubes color="#e02828" front="#c01018" /> },
  { label: "Red wire 3", icon: <TwinCubes color="#e02828" front="#c01018" /> },
  { label: "Gray solid", icon: <ViewCube face="all" fill="#888" stroke="#000" /> },
  "sep",
];

const LayerIcon = () => (
  <Icon>
    <path d="M0 10 8 6 16 10 8 15Z" fill="#e0552a" />
    <path d="M2 8 8 5 14 8 8 13Z" fill="#f0c020" />
    <path d="M5 6 8 0 11 6 8 8Z" fill="#58a83c" />
  </Icon>
);

const shapeTools: Tool[] = [
  "sep",
  {
    label: "Box",
    active: true,
    icon: (
      <Icon>
        <path d="M8 1 15 4 8 7 1 4Z" fill="#f8dca0" />
        <path d="M1 4 8 7V15L1 12Z" fill="#e7b45c" />
        <path d="M8 7 15 4V12L8 15Z" fill="#b67c26" />
      </Icon>
    ),
  },
  { label: "Prism", icon: <Icon><path d="M1 2 8 0 15 2 12 11 8 16 4 11Z" fill="#3c78c8" /><path d="M1 2 8 5 8 16 4 11Z" fill="#7fb4ea" /></Icon> },
  { label: "Ring", icon: <Icon><ellipse cx="8" cy="6" rx="6" ry="3.500" fill="#eee" stroke="#5d8fb8" strokeWidth="3" transform="rotate(-15 8 6)" /><path d="M3 15 15 3" stroke="#d06060" strokeWidth="1.500" /></Icon> },
  { label: "Dark ring", icon: <Icon><ellipse cx="8" cy="6" rx="6" ry="3.500" fill="#9ab" stroke="#2c3f5c" strokeWidth="3" transform="rotate(-15 8 6)" /><path d="M3 15 15 3" stroke="#d06060" strokeWidth="1.500" /></Icon> },
];

const ToolBars = () => (
  <div className="flex h-[26px] shrink-0 bg-[#999]">
    <div className="flex items-center border-b-2 border-l-2 border-r border-t border-[#555] bg-[#f0f0f0] pr-1">
      <Grip />
      <Combo id="entity" label="Entity" value="Entity" disabled className="w-[200px]" />
      <input aria-label="Entity name" className="ml-[2px] h-[21px] w-[149px] border border-[#a0a0a0] bg-[#eee]" />
      <ToolButton label="Apply" icon={<Icon><path d="M0 8 7 3V6Q13 6 15 3 16 11 7 11V14Z" fill="#2f83b5" stroke="#1e5c84" /></Icon>} />
      <MoreMark />
    </div>
    <div className="flex items-center border-b-2 border-l-2 border-r border-t border-[#555] bg-[#f0f0f0] pr-1">
      <Grip />
      <ToolRow tools={viewTools} />
      <MoreMark />
    </div>
    <div className="flex items-center border-2 border-t border-[#555] bg-[#f0f0f0] pr-1">
      <Grip />
      <ToolRow tools={renderTools} />
      <Combo id="layer" label="Layer" value="1" className="w-10" />
      <ToolButton label="Layer settings" icon={<LayerIcon />} />
      <ToolRow tools={shapeTools} />
      <MoreMark />
    </div>
  </div>
);

const axisPlane = (label: string, up: string, right: string, origin: string): Tool => ({
  label,
  icon: (
    <Icon>
      <path d="M2 13V3" stroke={up} strokeWidth="1.500" /><path d="M0 4 2 0 4 4Z" fill={up} />
      <path d="M3 13H13" stroke={right} strokeWidth="1.500" /><path d="M12 11 16 13 12 15Z" fill={right} />
      <circle cx="2" cy="13" r="2.500" fill={origin} />
      <text x="3" y="10" fontSize="10" fontFamily="Open Sans, sans-serif" fill="#111">{label}</text>
    </Icon>
  ),
});

const [R, G, B] = ["#ee3a3a", "#3aae2a", "#1f6fe8"];

const PLANES: Record<string, string> = {
  left: "M0 1 5 3V15L0 13Z",
  right: "M9 3 16 1V12L9 15Z",
  top: "M0 4 8 0 16 3 8 7Z",
  bottom: "M0 12 8 9 16 12 8 16Z",
};

const PlaneCube = ({ at }: { at: string }) => (
  <Icon>
    {at !== "over" && <path d={PLANES[at]} fill="#e2c39c" stroke="#8a6d4a" strokeWidth=".7" />}
    <path d="M3 4 9 2 14 4 8 6Z" fill="#c9e4f2" stroke="#333" strokeWidth=".7" />
    <path d="M3 4 8 6V13L3 11Z" fill="#8fbcd8" stroke="#333" strokeWidth=".7" />
    <path d="M8 6 14 4V11L8 13Z" fill="#5f95bb" stroke="#333" strokeWidth=".7" />
    {at === "over" && <path d="M0 1 7 4V15L0 12Z" fill="#e2c39c" fillOpacity=".85" stroke="#8a6d4a" strokeWidth=".7" />}
  </Icon>
);

const sheets = (
  <Icon>
    <path d="M7 1H15V9H7Z" fill="#fff8dc" stroke="#6b5620" />
    <path d="M5 3H13V11H5Z" fill="#fff8dc" stroke="#6b5620" />
    <path d="M3 5H11V13H3Z" fill="#fff8dc" stroke="#6b5620" />
    <path d="M1 7H9V15H1Z" fill="#e8d48a" stroke="#6b5620" />
  </Icon>
);

const selectTools: Tool[] = [
  { label: "Select", active: true, icon: <Icon><path d="M4 1V13L7 10 9 15 11 14 9 9H13Z" fill="#444" /></Icon> },
  { label: "Toggle select", icon: <Icon><Cursor /><path d="M7 3H12M9.500 0V6M11 7 16 1M12 7H16" stroke="#000" strokeWidth="1.500" /></Icon> },
  { label: "Add select", icon: <Icon><Cursor /><path d="M9 5H16M12.500 2V9" stroke="#000" strokeWidth="2" /></Icon> },
  { label: "Remove select", icon: <Icon><Cursor /><path d="M8 5H16" stroke="#000" strokeWidth="2" /></Icon> },
  "sep",
  { label: "Snap grid", active: true, icon: <Icon><path d="M1 1H15V15H1ZM1 6H15M1 11H15M6 1V15M11 1V15" stroke="#2a74c0" /><circle cx="5" cy="6" r="2.500" fill="#e81c24" /><path d="M9 5 15 11H12L13 15 11 15 9 12Z" fill="#333" /></Icon> },
  { label: "Snap body", active: true, icon: <Icon><path d="M2 5 6 1H15V11L11 15H2Z M2 5H11V15M11 5 15 1" stroke="#4f8fc8" /><circle cx="2" cy="5" r="2" fill="#e81c24" /><path d="M4 5 10 11H7L8 15 6 15 4 12Z" fill="#444" /></Icon> },
  { label: "Snap mesh", active: true, icon: <Icon><path d="M2 5 6 1H15V11L11 15H2ZM2 5H11V15M11 5 15 1M6 5V15M2 10H11L15 6M10 1V5" stroke="#3b5f92" /><circle cx="2" cy="5" r="2" fill="#e81c24" /><path d="M4 5 10 11H7L8 15 4 12Z" fill="#444" /></Icon> },
  "sep",
  { label: "All", active: true, icon: <Icon><text x="8" y="13" textAnchor="middle" fontSize="14" fontWeight="700" fontFamily="Liberation Sans, sans-serif" fill="#1f5fae">All</text></Icon> },
  { label: "Bodies", icon: <SolidCube pale /> },
  { label: "Groups", icon: <GroupIcon /> },
  { label: "Markers", icon: <Icon><circle cx="8" cy="10" r="2" stroke="#333" /><path d="M8 8V3M6 11 2 14M10 11 14 14" stroke="#333" /><path d="M5 5 8 0 11 5Z" fill="#2fb52e" /><path d="M0 15 2 10 5 14Z" fill={B} /><path d="M16 15 14 10 11 14Z" fill={R} /></Icon> },
  { label: "Joints", icon: <JointIcon /> },
  { label: "Forces", icon: <ForceIcon /> },
  { label: "Contacts", icon: <ContactIcon /> },
  { label: "Points", icon: <PPIcon /> },
  { label: "Solids", icon: <Icon><path d="M2 5 8 3 14 5V12L8 15 2 12Z" fill="#1f4668" /><path d="M8 7 14 5V12L8 15Z" fill="#3f8fc0" /><circle cx="8" cy="6" r="2" fill="#ddd" /></Icon> },
  "sep",
  { label: "Box select", active: true, icon: <Icon><path d="M1 1H15V15H1Z" stroke="#3f3560" strokeDasharray="3 2" /></Icon> },
  { label: "Circle select", icon: <Icon><circle cx="8" cy="8" r="7" stroke="#555" strokeDasharray="3 2" /></Icon> },
  { label: "Polygon select", icon: <Icon><path d="M8 1 15 6 12 15H4L1 6Z" stroke="#777" strokeDasharray="2 2" /></Icon> },
  "sep",
  { label: "Layered select", active: true, icon: sheets },
  { label: "Single layer", icon: sheets },
];

const planeTools: Tool[] = [
  axisPlane("XY", G, R, B),
  axisPlane("YX", R, G, B),
  axisPlane("YZ", B, G, R),
  axisPlane("ZY", G, B, R),
  axisPlane("ZX", R, B, G),
  axisPlane("XZ", B, R, G),
  { label: "Rotate", icon: <Icon><circle cx="6" cy="9" r="5" stroke="#111" strokeWidth="1.500" /><path d="M6 9V1M6 9H15" stroke={G} /><path d="M12 7 16 9 12 11Z" fill={R} /><circle cx="6" cy="9" r="2" fill={B} /></Icon> },
  "sep",
  { label: "Plane left", icon: <PlaneCube at="over" /> },
  { label: "Plane right", icon: <PlaneCube at="right" /> },
  { label: "Plane rear", icon: <PlaneCube at="left" /> },
  { label: "Plane side", icon: <PlaneCube at="right" /> },
  { label: "Plane top", icon: <PlaneCube at="top" /> },
  { label: "Plane bottom", icon: <PlaneCube at="bottom" /> },
  { label: "Plane cut", icon: <PlaneCube at="over" /> },
  "sep",
  { label: "Properties", icon: <Icon><path d="M0 0H14V11H0Z" fill="#2c66c0" /><path d="M5 6H16V16H5Z" fill="#fff" /><path d="M6 8H8M10 8H16M6 11H8M10 11H16M6 14H8M10 14H16" stroke="#111" strokeWidth="2" /></Icon> },
];

const manipulateTools: Tool[] = [
  { label: "Reselect", icon: <Icon><Cursor /><path d="M8 4A4 4 0 0 1 15 3M16 5A4 4 0 0 1 9 7" stroke="#1f6fe8" strokeWidth="1.500" /><path d="M13 4H16V0Z M11 6H8V9Z" fill="#1f6fe8" /></Icon> },
  { label: "Deselect", icon: <Icon><Cursor x={2} /><circle cx="10" cy="5" r="3.500" stroke="#e02028" strokeWidth="1.500" /><path d="M8 3 12 7" stroke="#e02028" strokeWidth="1.500" /></Icon> },
  "sep",
  { label: "Move", icon: <Icon><path d="M3 1Q-1 8 3 15M13 1Q17 8 13 15M8 2V14M3 8H13M6 4 8 2 10 4M6 12 8 14 10 12M5 6 3 8 5 10M11 6 13 8 11 10" stroke="#111" strokeWidth="1.200" /></Icon> },
  { label: "Turn", icon: <Icon><circle cx="8" cy="8" r="5" stroke="#111" strokeWidth="1.500" /><path d="M1 1 15 15M15 1 1 15M1 4V1H4M12 1H15V4M15 12V15H12M4 15H1V12" stroke="#111" /></Icon> },
  "sep",
  { label: "Color cube", icon: <Icon><path d="M2 4 6 1H15V12L11 15H2Z" fill="#3a8fb5" /><path d="M6 3H15V9H6Z" fill="#d8303c" /><path d="M11 10 15 8V12L11 15Z" fill="#2c9a3c" /><path d="M2 5V15M6 1V15M2 10H15M2 5H15M11 4V15" stroke="#222" strokeWidth=".7" /><circle cx="2" cy="10" r="1.500" fill="#e02028" /><circle cx="2" cy="14" r="1.500" fill="#e02028" /></Icon> },
  { label: "Network", icon: <Icon><path d="M8 8 2 2M8 8 14 3M8 8 2 14M8 8 14 14M8 8V2" stroke="#e8952a" /><circle cx="8" cy="8" r="3" fill="#2aa0e8" /><circle cx="2" cy="3" r="1.500" fill="#f2941c" /><circle cx="14" cy="3" r="2" fill="#f2941c" /><circle cx="2" cy="14" r="1.800" fill="#f2941c" /><circle cx="14" cy="13" r="2.500" fill="#f2941c" /></Icon> },
  { label: "Triad", icon: <Icon><path d="M7 9V2" stroke="#2c9a3c" strokeWidth="2" /><path d="M7 9 1 14" stroke="#1f3fc0" strokeWidth="2" /><path d="M7 9 14 13M7 9 15 7M9 1 15 4" stroke="#e02028" strokeWidth="1.500" /></Icon> },
];

/* ---------- viewport ---------- */

// pale specks scattered along the rim of the contact patch
const specks = Array.from({ length: 120 }, (_, i) => {
  const a = i * 2.4;
  const r = 0.72 + ((i * i * 31) % 29) / 100;
  return { x: Math.round(900 + 98 * r * Math.cos(a)), y: Math.round(717 + 17 * r * Math.sin(a)) };
});

const NavArrows = () => (
  <g fill="#bcbdbe" stroke="#8f9090" strokeWidth=".7" fillOpacity=".85">
    <path d="M192 608 200 616H184ZM192 617 200 625H184ZM192 626 199 641H184Z" />
    <path d="M184 808H199L192 823ZM184 824H200L192 832ZM184 833H200L192 840Z" />
    <path d="M76 724 84 717V732ZM84 724 92 717V732ZM93 724 108 717V732Z" />
    <path d="M275 717 290 724 275 732ZM291 717 299 724 291 732ZM299 717 307 724 299 732Z" />
    <path d="M125 680 141 676 136 691ZM136 669 147 668V679ZM144 664H153V673Z" />
    <path d="M225 780 241 776 236 791ZM236 769 247 768V779ZM244 763H253V772Z" />
  </g>
);

const Scene = () => (
  <svg viewBox="58 187 1591 670" className="h-full w-full" fill="none">
    <g stroke="#5c5c5c" strokeWidth="1">
      <path d="M568 736 741 682 1011 690 1210 705 1001 770Z" fill="#808080" />
      <path d="M568 736 1001 770V794L568 760Z" fill="#838383" />
      <path d="M1001 770 1210 705V729L1001 794Z" fill="#646464" />
    </g>
    <path d="M800 695H978V704L900 726H806L800 721Z" fill="#e0fbfb" />
    <g stroke="#6f8484" strokeWidth="1" strokeLinejoin="round">
      <path d="M743 315 832 284 1039 299V303L950 330Z" fill="#e0ffff" />
      <path d="M743 315 950 330 949 702 741 696Z" fill="#e2ffff" />
      <path d="M950 330 1039 303 1038 679 949 702Z" fill="#afcbca" />
    </g>
    <g stroke="#5a2a24">
      <path d="M755 288V314H826V288Z" fill="#9c3428" stroke="none" />
      <path d="M755 288V314M761 292V314" />
      <ellipse cx="790" cy="288" rx="36" ry="6" fill="#a83c30" />
      <path d="M948 279V304H1020V279Z" fill="#9c3428" stroke="none" />
      <path d="M948 279V304M954 283V304" />
      <ellipse cx="984" cy="279" rx="36" ry="6" fill="#a83c30" />
    </g>
    <g fill="#0000ff">
      <path d="M755 303Q760 298 801 298T847 303V312Q841 317 801 317T755 311Z" />
      <path d="M948 293Q954 288 994 288T1040 294V302Q1034 308 994 308T948 302Z" />
      <ellipse cx="900" cy="717" rx="98" ry="17" stroke="#0000ff" strokeWidth="2" strokeDasharray="2 1" />
    </g>
    {specks.map((s, i) => (
      <rect key={i} x={s.x} y={s.y} width="1" height={i % 3 === 0 ? 2 : 1} fill="#e0ffff" />
    ))}
    <g strokeWidth="2">
      <path d="M889 640 850 637" stroke="#0a5ae0" /><path d="M843 636 852 632V641Z" fill="#0a5ae0" />
      <path d="M889 640 905 635" stroke="#e83030" /><path d="M913 633 906 632 908 639Z" fill="#e83030" />
      <path d="M889 640V682" stroke="#30e010" /><path d="M889 689 885 680H893Z" fill="#30e010" />
      <path d="M868 637 873 639M889 656V659M896 638 898 637" stroke="#f4ffff" />
    </g>
    <g fontSize="12" fontFamily="Open Sans, sans-serif">
      <text x="843" y="637" fill="#0a5ae0">Z</text>
      <text x="911" y="634" fill="#e83030">X</text>
      <text x="888" y="690" fill="#30e010">Y</text>
    </g>
    <NavArrows />
    <path d="M191 724 154 721" stroke="#0c2f78" strokeWidth="5" />
    <path d="M141 721 154 716V727Z" fill="#0a1e4c" />
    <path d="M195 723 211 718" stroke="#b82020" strokeWidth="5" />
    <path d="M214 717V721" stroke="#7a1a1a" strokeDasharray="1 2" />
    <path d="M191 728V766" stroke="#1c7a0c" strokeWidth="5" />
    <path d="M185 764H198L192 779Z" fill="#17500c" />
    <circle cx="191" cy="724" r="5" fill="#00ff00" />
    <g fontSize="14" fontWeight="700" fontFamily="Open Sans, sans-serif">
      <text x="133" y="720" fill="#1f5ff0">Z</text>
      <text x="219" y="716" fill="#f03434">X</text>
      <text x="190" y="789" fill="#40d818">Y</text>
    </g>
  </svg>
);

const Document = () => (
  <main className="flex min-w-0 flex-1 flex-col">
    <div className="flex h-[21px] shrink-0 items-end bg-[#999] pl-[2px] pr-[2px]">
      <div className="flex h-[19px] w-[138px] items-center justify-between rounded-t-sm border border-b-0 border-[#666] bg-[#f0f0f0] pl-[7px] pr-1 text-black">
        <Icon box={32} size="h-[14px] w-[14px]"><path d="M2 0H22L31 8V32H2Z" fill="#fff" stroke="#666" strokeWidth="2" /><StarShape /></Icon>
        <span className="text-[12px] font-bold">Stiffness_8.rdyn</span>
        <button aria-label="Close document"><X className="h-[10px] w-[10px]" strokeWidth={2.5} /></button>
      </div>
      <button aria-label="New document" className="mb-[2px] ml-[9px]">
        <Icon size="h-[14px] w-[14px]"><path d="M2 1H10L14 5V15H2Z" fill="#fff" stroke="#333" /><path d="M10 1V5H14" stroke="#333" /></Icon>
      </button>
      <div className="mb-[6px] ml-auto flex items-center gap-[6px] pr-px">
        <Arrow className="text-black" />
        <button aria-label="Close view"><X className="h-[9px] w-[9px] text-black" strokeWidth={3} /></button>
      </div>
    </div>
    <div className="min-h-0 flex-1 border border-[#555] bg-[#dadcda] p-[4px]">
      <div className="relative h-full border-b-2 border-l border-r-2 border-t border-[#fff] border-l-black border-t-black bg-[linear-gradient(#ffffff,#f0f0f0_10%,#c8c8c8_38%,#acacac_57%,#9c9d9c_65%,#7b7d79_91%,#6d6f6b)]">
        <Scene />
        <div className="absolute left-3 top-1 whitespace-pre font-['Liberation_Sans',sans-serif] text-[12px] leading-4 text-[#0b94b8]">
          <p>Test</p>
          <p>Time   =  110,00000000  Second</p>
        </div>
      </div>
    </div>
    <section className="flex h-[146px] shrink-0 flex-col bg-[#f0f0f0] pt-[6px]">
      <header className="flex h-[23px] items-center gap-[6px] border border-[#a0a0a0] bg-white px-[3px] text-[#999]">
        <h2 className="flex-1">Message</h2>
        <button aria-label="Pin message"><PinIcon /></button>
        <button aria-label="Close message"><X className="h-[14px] w-[14px]" strokeWidth={1.5} /></button>
      </header>
      <div className="mt-[2px] flex-1 bg-white" />
    </section>
  </main>
);

/* ---------- title and tabs ---------- */

const page = "M3 1H10L14 5V15H3Z";
const floppy = "M1 1H14L15 3V15H1Z";

const quick: { label: string; icon: ReactNode }[] = [
  { label: "New", icon: <><path d={page} fill="#fff" stroke="#222" /><path d="M10 1V5H14" stroke="#222" /></> },
  { label: "Open", icon: <><path d="M1 2H8V15H1Z" fill="#f3cf85" stroke="#a98235" /><path d="M6 1H12L15 4V13H6Z" fill="#fff" stroke="#333" /></> },
  { label: "Save", icon: <><path d={floppy} fill="#222" /><path d="M4 1H12V6H4ZM4 9H12V15H4Z" fill="#fff" /><path d="M9 2V5M5 11H11M5 13H11" stroke="#222" /></> },
  { label: "Save all", icon: <><path d="M1 1H10V12H1Z" fill="#ddd" stroke="#444" /><path d="M4 4H15L16 5V16H4Z" fill="#222" /><path d="M6 4H13V8H6ZM7 11H13V16H7Z" fill="#fff" /></> },
  { label: "Recent", icon: <><path d="M1 1H11V14H1Z" fill="#f3cf85" stroke="#a98235" /><circle cx="12" cy="11" r="4" fill="#fff" stroke="#d08a28" /><path d="M12 9V11H14" stroke="#555" /></> },
];

const tabs = ["Home", "SubEntity", "Analysis", "Professional", "Flexible", "Data Driven Design", "Post Analysis", "DriveTrain", "Linked Assembly", "AutoDesign", "Communicator", "Toolkit", "Customize"];

const TitleBar = () => (
  <header className="relative shrink-0">
    <div className="grid h-[23px] grid-cols-[1fr_auto_1fr] items-start bg-white">
      <div className="flex pl-[47px]">
        <div className="flex h-[21px] w-[221px] items-center gap-[5px] border border-[#aaa] bg-[#f4f4f4] px-[2px]">
          {quick.map((q) => (
            <button key={q.label} aria-label={q.label}><Icon>{q.icon}</Icon></button>
          ))}
          <button aria-label="Undo" className="ml-px"><Icon><path d="M1 6 7 1V4Q15 4 14 9 13 14 8 15 12 9 7 8V11Z" fill="#d6d6d6" stroke="#aaa" /></Icon></button>
          <Arrow className="text-[#aaa]" />
          <button aria-label="Redo"><Icon><path d="M15 6 9 1V4Q1 4 2 9 3 14 8 15 4 9 9 8V11Z" fill="#d6d6d6" stroke="#aaa" /></Icon></button>
          <Arrow className="text-[#aaa]" />
          <button aria-label="Update"><Icon><path d="M3 1H13V9H3Z" fill="#d0d0d0" stroke="#aaa" /><path d="M1 6 4 12H12L8 16 10 11" stroke="#bbb" strokeWidth="2" /></Icon></button>
          <button aria-label="Analysis type"><Gyro size="h-[15px] w-[15px]" /></button>
        </div>
        <span className="ml-[6px] mt-[7px]"><Icon box={6} size="h-[6px] w-[6px]"><path d="M0 0H6" stroke="#555" /><path d="M0 2H6L3 5Z" fill="#555" /></Icon></span>
      </div>
      <h1 className="mt-1 whitespace-pre text-[12px] leading-[18px] text-black">{"RecurDyn 2024   - [Stiffness_8.rdyn *]"}</h1>
      <div className="flex justify-end pr-[3px]">
        {["M3 8H13", "M3 6H10V13H3ZM5 6V3H13V11H10", "M3 3 13 13M13 3 3 13"].map((d, i) => (
          <button key={d} aria-label={["Minimize", "Restore", "Close"][i]} className="flex h-[21px] w-[46px] items-center justify-center">
            <Icon><path d={d} stroke="#000" /></Icon>
          </button>
        ))}
      </div>
    </div>
    <nav className="flex h-[23px] items-end gap-px bg-[#999] pl-[47px] text-black">
      {tabs.map((tab) => (
        <a key={tab} href="#" className={clsx("flex h-[21px] items-center whitespace-nowrap px-[14px]", tab === "Analysis" && "bg-[#f0f0f0]")}>
          {tab}
        </a>
      ))}
      <div className="mb-[5px] ml-auto flex items-center gap-1 pr-[3px]">
        <button aria-label="Collapse ribbon" className="mr-2"><Icon size="h-3 w-3"><path d="M0 7 8 1 16 7V10L8 5 0 10ZM0 13 8 7 16 13V16L8 11 0 16Z" fill="#444" /></Icon></button>
        <button aria-label="Help" className="text-[15px] font-extrabold leading-[14px]">?</button>
        <Arrow className="text-[#dfe6ff]" />
        {["M2 13H13", "M2 7H10V14H2ZM5 7V3H14V10H10", "M3 3 13 13M13 3 3 13"].map((d, i) => (
          <button key={d} aria-label={["Minimize document", "Restore document", "Close active document"][i]} className="ml-px">
            <Icon size="h-3 w-3"><path d={d} stroke="#000" strokeWidth={i === 1 ? 2 : 3} /></Icon>
          </button>
        ))}
      </div>
    </nav>
    <button aria-label="Application menu" className="absolute left-1 top-[2px] flex h-[37px] w-[37px] items-center justify-center rounded-full border border-[#777] bg-white">
      <Icon box={32} size="h-[30px] w-[30px]"><StarShape /></Icon>
    </button>
  </header>
);

const StatusBar = () => (
  <footer className="flex h-[23px] shrink-0 items-center divide-x divide-[#bbb] border-b border-t border-black bg-white text-black [&>span]:whitespace-nowrap [&>span]:px-1 [&>span]:leading-4">
    <span className="flex-1">
      <span className="pl-[53px]">{"Select <1> Entity : Subsystem edit mode."}</span>
    </span>
    <span className="h-4 w-[166px]" />
    <span className="h-4 w-[94px]" />
    <span className="w-[27px]">Car</span>
    <span className="w-[39px]">Global</span>
    <span className="w-[154px]">X:3000 Y:200 Z:0</span>
    <span className="w-[34px]">Local</span>
    <span className="w-[129px]">X:200 Y:3000</span>
    <span className="w-[80px]">N/kg/mm/s</span>
  </footer>
);

const App = () => (
  <div className="flex h-screen min-h-[700px] flex-col overflow-hidden bg-[#f0f0f0] font-['Open_Sans',sans-serif] text-[11px] leading-4">
    <TitleBar />
    <Ribbon />
    <ToolBars />
    <div className="flex min-h-0 flex-1">
      <div className="w-[26px] shrink-0 bg-[#999]">
        <ToolColumn tools={selectTools} />
      </div>
      <div className="w-[26px] shrink-0 bg-[#999]">
        <ToolColumn tools={planeTools} />
        <ToolColumn tools={manipulateTools} />
      </div>
      <Document />
      <div className="w-[6px] shrink-0" />
      <DatabasePanel />
      <div className="w-px shrink-0" />
    </div>
    <StatusBar />
  </div>
);

export default App;
